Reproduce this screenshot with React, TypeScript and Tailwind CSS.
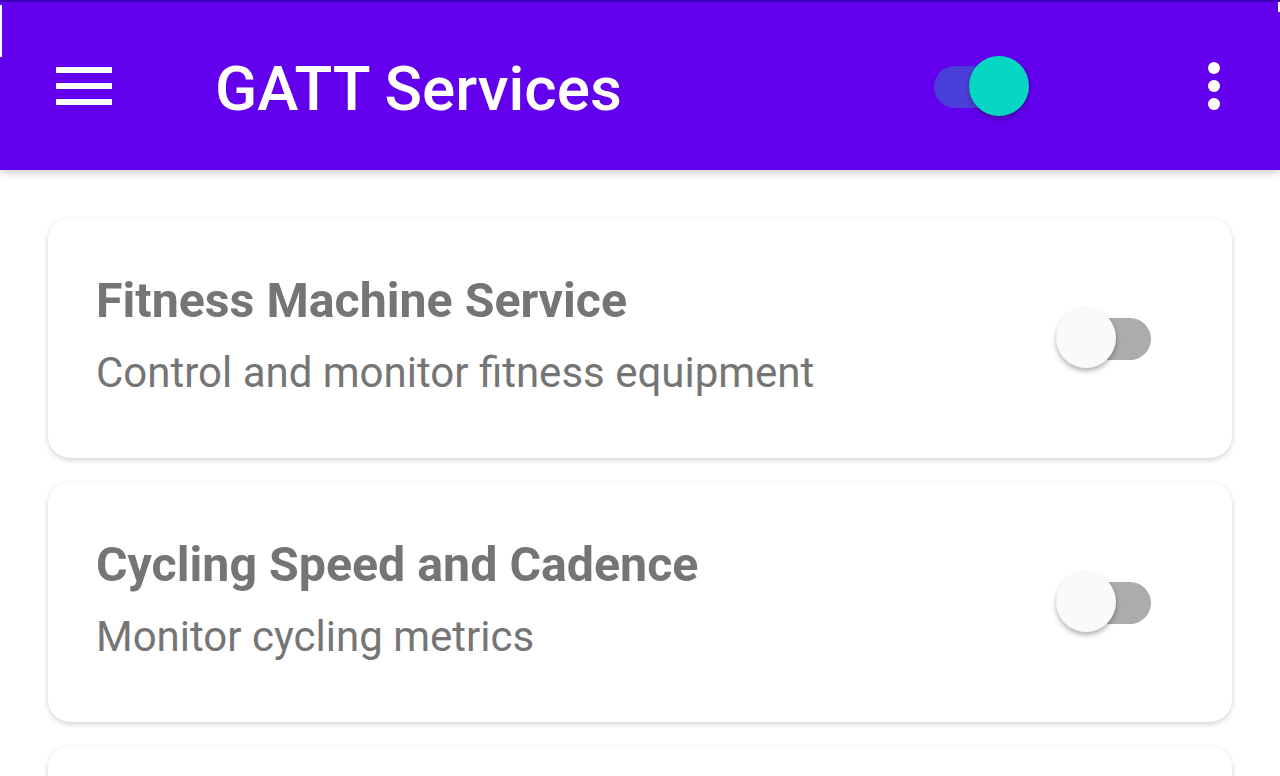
import { useState } from "react";

const services = [
  { name: "Fitness Machine Service", desc: "Control and monitor fitness equipment" },
  { name: "Cycling Speed and Cadence", desc: "Monitor cycling metrics" },
  { name: "Heart Rate", desc: "Monitor heart rate" },
];

function Toggle({ on, onClick, header }: { on: boolean; onClick: () => void; header?: boolean }) {
  return (
    <button onClick={onClick} className="relative h-[60px] w-[94px] shrink-0">
      <span
        className={`absolute left-0 top-[10px] h-[42px] w-[94px] rounded-full ${
          header ? "bg-[#4a40d9]" : on ? "bg-[#81e9df]" : "bg-[#acacac]"
        }`}
      />
      <span
        className={`absolute top-0 h-[60px] w-[60px] rounded-full shadow-[0_3px_5px_rgba(0,0,0,0.3)] ${
          on ? "left-[35px] bg-[#05d7c3]" : "left-[-1px] bg-[#fafafa]"
        }`}
      />
    </button>
  );
}

export default function App() {
  const [main, setMain] = useState(true);
  const [enabled, setEnabled] = useState<boolean[]>([false, false, false]);

  return (
    <div className="h-[776px] overflow-hidden bg-white font-['Roboto',sans-serif]">
      <header className="relative z-10 flex h-[170px] items-center border-t-2 border-[#3a00b6] bg-[#6200ee] shadow-[0_3px_8px_rgba(0,0,0,0.18)]">
        {/* status bar edge leftovers */}
        <span className="absolute left-0 top-[3px] h-[52px] w-[2px] bg-white" />
        <span className="absolute right-0 top-0 h-[10px] w-[2px] bg-white" />
        <div className="ml-[56px] flex w-[56px] flex-col gap-[10px]">
          <span className="h-[6px] bg-white" />
          <span className="h-[6px] bg-white" />
          <span className="h-[6px] bg-white" />
        </div>
        <h1 className="ml-[103px] mt-[4px] text-[62px] font-medium text-white">GATT Services</h1>
        <div className="ml-auto mr-[180px] mt-[6px]">
          <Toggle header on={main} onClick={() => setMain(!main)} />
        </div>
        <div className="mr-[60px] flex flex-col gap-[6px]">
          <span className="h-[12px] w-[12px] rounded-full bg-white" />
          <span className="h-[12px] w-[12px] rounded-full bg-white" />
          <span className="h-[12px] w-[12px] rounded-full bg-white" />
        </div>
      </header>

      <main className="flex flex-col gap-[24px] px-[48px] pt-[48px]">
        {services.map((s, i) => (
          <div
            key={s.name}
            className="flex h-[240px] shrink-0 items-center rounded-[22px] bg-white pl-[48px] pr-[81px] shadow-[0_2px_5px_rgba(0,0,0,0.18)]"
          >
            <div className="flex flex-1 flex-col gap-[16px] pb-[6px]">
              <h2 className="text-[48.3px] font-bold leading-tight text-[#757575]">{s.name}</h2>
              <p className="text-[42px] leading-tight text-[#757575]">{s.desc}</p>
            </div>
            <Toggle
              on={enabled[i]}
              onClick={() => setEnabled(enabled.map((v, j) => (j === i ? !v : v)))}
            />
          </div>
        ))}
      </main>
    </div>
  );
}
